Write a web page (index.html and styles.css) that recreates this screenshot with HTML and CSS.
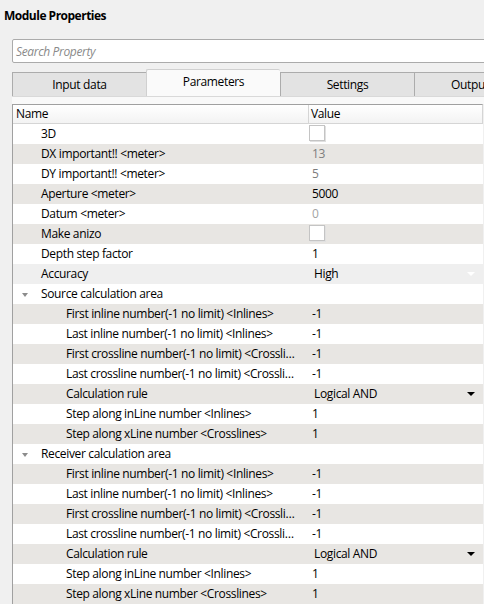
FILE: index.html
```html
<!DOCTYPE html>
<html>
<head>
<meta charset="utf-8">
<link rel="stylesheet" href="styles.css">
</head>
<body>
<div class="title">Module Properties</div>
<div class="search"><span class="placeholder">Search Property</span></div>
<div class="tabs">
  <div class="tab">Input data</div>
  <div class="tab active">Parameters</div>
  <div class="tab">Settings</div>
  <div class="tab last">Output</div>
</div>
<div class="pane-gap"></div>
<div class="table">
  <div class="head">
    <div class="hcell name-h">Name</div>
    <div class="hcell value-h">Value</div>
  </div>
  <div class="row"><div class="name l1">3D</div><div class="val"><span class="check"></span></div></div>
  <div class="row alt"><div class="name l1">DX important!! &lt;meter&gt;</div><div class="val dim">13</div></div>
  <div class="row"><div class="name l1">DY important!! &lt;meter&gt;</div><div class="val dim">5</div></div>
  <div class="row alt"><div class="name l1">Aperture &lt;meter&gt;</div><div class="val">5000</div></div>
  <div class="row"><div class="name l1">Datum &lt;meter&gt;</div><div class="val dim2">0</div></div>
  <div class="row alt"><div class="name l1">Make anizo</div><div class="val"><span class="check"></span></div></div>
  <div class="row"><div class="name l1">Depth step factor</div><div class="val">1</div></div>
  <div class="row light"><div class="name l1">Accuracy</div><div class="val combo">High<span class="arrow pale"></span></div></div>
  <div class="row"><div class="name l1 group"><span class="caret"></span>Source calculation area</div><div class="val"></div></div>
  <div class="row alt"><div class="name l2">First inline number(-1 no limit) &lt;Inlines&gt;</div><div class="val">-1</div></div>
  <div class="row"><div class="name l2">Last inline number(-1 no limit) &lt;Inlines&gt;</div><div class="val">-1</div></div>
  <div class="row alt"><div class="name l2">First crossline number(-1 no limit) &lt;Crosslines&gt;</div><div class="val">-1</div></div>
  <div class="row"><div class="name l2">Last crossline number(-1 no limit) &lt;Crosslines&gt;</div><div class="val">-1</div></div>
  <div class="row alt"><div class="name l2">Calculation rule</div><div class="val combo">Logical AND<span class="arrow"></span></div></div>
  <div class="row"><div class="name l2">Step along inLine number &lt;Inlines&gt;</div><div class="val">1</div></div>
  <div class="row alt"><div class="name l2">Step along xLine number &lt;Crosslines&gt;</div><div class="val">1</div></div>
  <div class="row"><div class="name l1 group"><span class="caret"></span>Receiver calculation area</div><div class="val"></div></div>
  <div class="row alt"><div class="name l2">First inline number(-1 no limit) &lt;Inlines&gt;</div><div class="val">-1</div></div>
  <div class="row"><div class="name l2">Last inline number(-1 no limit) &lt;Inlines&gt;</div><div class="val">-1</div></div>
  <div class="row alt"><div class="name l2">First crossline number(-1 no limit) &lt;Crosslines&gt;</div><div class="val">-1</div></div>
  <div class="row"><div class="name l2">Last crossline number(-1 no limit) &lt;Crosslines&gt;</div><div class="val">-1</div></div>
  <div class="row alt"><div class="name l2">Calculation rule</div><div class="val combo">Logical AND<span class="arrow"></span></div></div>
  <div class="row"><div class="name l2">Step along inLine number &lt;Inlines&gt;</div><div class="val">1</div></div>
  <div class="row alt"><div class="name l2">Step along xLine number &lt;Crosslines&gt;</div><div class="val">1</div></div>
</div>
</body>
</html>
```

FILE: styles.css
```css
html, body {
  margin: 0;
  padding: 0;
  background: #f0f0f0;
  font-family: "Open Sans", "Noto Sans", sans-serif;
  font-size: 12px;
  letter-spacing: -0.35px;
  color: #000;
  overflow: hidden;
  width: 484px;
  height: 604px;
}

.title {
  font-weight: bold;
  height: 16px;
  line-height: 16px;
  padding: 8px 0 0 4px;
  letter-spacing: -0.5px;
}

.search {
  margin: 15px 0 0 12px;
  width: 490px;
  height: 22px;
  border: 1px solid #ababab;
  border-radius: 2px 0 0 2px;
  background: #fff;
  display: flex;
  align-items: center;
}

.placeholder {
  font-style: italic;
  color: #8a8a8a;
  padding-left: 3px;
}

.tabs {
  display: flex;
  align-items: flex-end;
  margin: 7px 0 0 12px;
  height: 26px;
  width: 540px;
}

.tab {
  flex: 0 0 auto;
  width: 133px;
  height: 23px;
  line-height: 23px;
  text-align: center;
  background: #e3e3e3;
  border: 1px solid #acacac;
  border-bottom: none;
  border-right: none;
}

.tab.last {
  width: 110px;
}

.tab.active {
  height: 26px;
  line-height: 24px;
  background: #fafafa;
  border-color: #d0d0d0;
  border-radius: 2px 2px 0 0;
}

.tab.active + .tab {
  border-left-color: #acacac;
}

.pane-gap {
  height: 7px;
  margin-left: 12px;
  border-top: 1px solid #d9d9d9;
  background: #f9f9f9;
}

.table {
  margin-left: 12px;
  width: 470px;
  border-left: 1px solid #a0a0a0;
  background: #fff;
}

.head {
  display: grid;
  grid-template-columns: 295px 1fr;
  height: 18px;
  border-top: 1px solid #a0a0a0;
  border-bottom: 1px solid #d5d5d5;
  border-right: 1px solid #d5d5d5;
  background: linear-gradient(#ffffff, #f3f3f3);
}

.hcell {
  line-height: 18px;
  padding-left: 3px;
}

.value-h {
  border-left: 1px solid #d5d5d5;
  padding-left: 2px;
}

.row {
  display: grid;
  grid-template-columns: 299px 1fr;
  height: 20px;
  line-height: 20px;
  background: #fff;
}

.row.alt {
  background: #e8e6e3;
}

.row.light {
  background: #efefef;
}

.name {
  white-space: nowrap;
  overflow: hidden;
  text-overflow: ellipsis;
  padding-right: 12px;
  position: relative;
}

.name.l1 {
  padding-left: 28px;
}

.name.l2 {
  padding-left: 53px;
}

.caret {
  position: absolute;
  left: 9px;
  top: 9px;
  width: 0;
  height: 0;
  border-left: 3.5px solid transparent;
  border-right: 3.5px solid transparent;
  border-top: 4px solid #8c8c8c;
}

.val {
  position: relative;
}

.val.dim {
  color: #7d7d7d;
}

.val.dim2 {
  color: #a3a3a3;
}

.val.combo {
  padding-left: 2px;
}

.arrow {
  position: absolute;
  right: 8px;
  top: 8px;
  width: 0;
  height: 0;
  border-left: 4px solid transparent;
  border-right: 4px solid transparent;
  border-top: 4px solid #000;
}

.arrow.pale {
  border-top-color: #ffffff;
}

.check {
  display: inline-block;
  vertical-align: top;
  margin-top: 1px;
  margin-left: -3px;
  width: 14px;
  height: 14px;
  border: 1px solid #c4c4c4;
  box-shadow: 1px 1px 0 #e0e0e0;
  background: #fff;
}
```
